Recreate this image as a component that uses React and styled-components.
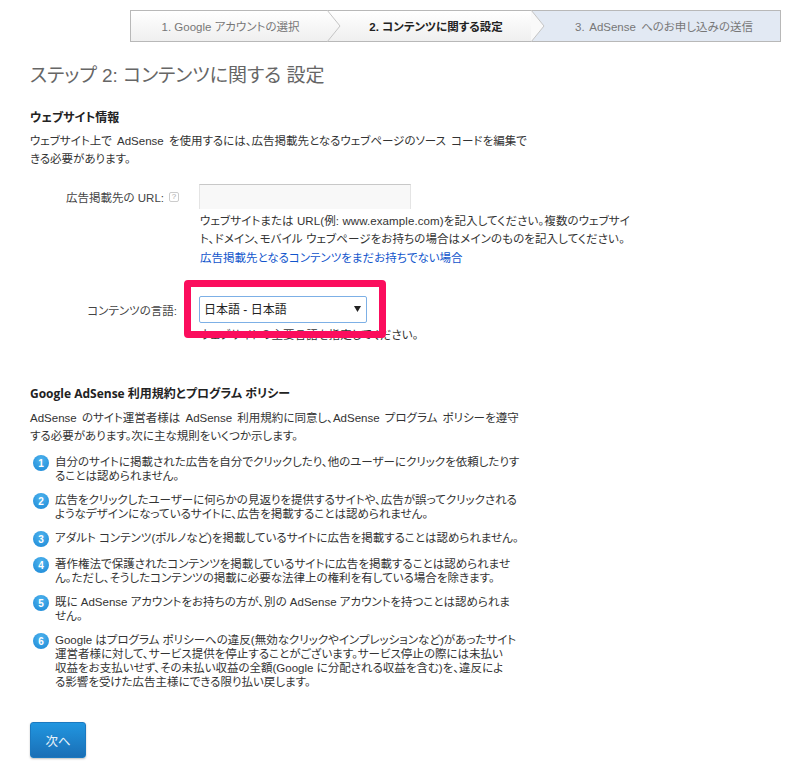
import React from "react";
import styled, { createGlobalStyle } from "styled-components";

const Global = createGlobalStyle`
  html, body { margin: 0; padding: 0; background: #fff; }
  body {
    font-family: "Liberation Sans", "Noto Sans CJK JP", sans-serif;
    font-size: 11.5px;
    font-feature-settings: "palt";
    color: #333;
  }
`;

const Page = styled.div`
  position: relative;
  width: 800px;
  height: 767px;
  overflow: hidden;
  box-sizing: border-box;
  padding: 10px 19px 0 30px;
`;

const Stepper = styled.div`
  display: flex;
  height: 32px;
  margin-left: 100px;
  box-sizing: border-box;
  border: 1px solid #b8b8b8;
  background: linear-gradient(#ffffff, #efefef);
`;

const Step = styled.div`
  position: relative;
  box-sizing: border-box;
  width: ${(p) => p.$w}px;
  flex: ${(p) => (p.$grow ? "1" : "none")};
  display: flex;
  align-items: center;
  justify-content: center;
  padding-left: ${(p) => p.$pl || 0}px;
  padding-right: ${(p) => p.$pr || 0}px;
  font-size: 11.5px;
  word-spacing: ${(p) => (p.$future ? 2 : 0)}px;
  color: ${(p) => (p.$active ? "#222" : "#777")};
  font-weight: ${(p) => (p.$active ? 700 : 400)};
  background: ${(p) => (p.$future ? "#e2e9f3" : "transparent")};
`;

const Chevron = styled.svg`
  position: absolute;
  right: -13px;
  top: -1px;
  width: 14px;
  height: 32px;
  z-index: 1;
`;

const Title = styled.h1`
  margin: 22px 0 0;
  font-size: 19px;
  font-weight: 400;
  line-height: 24px;
  color: #666;
`;

const SectionTitle = styled.h2`
  margin: ${(p) => p.$top}px 0 0;
  font-family: "Open Sans", "Noto Sans CJK JP", sans-serif;
  font-size: 12px;
  font-weight: 700;
  line-height: 16px;
  color: #222;
`;

const Para = styled.p`
  margin: ${(p) => p.$top || 0}px 0 0;
  line-height: 18px;
  word-spacing: 2px;
  color: #333;
  white-space: nowrap;
`;

const FormRow = styled.div`
  display: grid;
  grid-template-columns: 147px 1fr;
  column-gap: 22px;
  margin-top: ${(p) => p.$top}px;
`;

const Label = styled.div`
  display: flex;
  justify-content: flex-end;
  align-items: center;
  gap: 5px;
  height: ${(p) => p.$h}px;
  color: #444;
  white-space: nowrap;
`;

const Help = styled.span`
  display: inline-flex;
  align-items: center;
  justify-content: center;
  width: 8px;
  height: 8px;
  border: 1px solid #ccc;
  border-radius: 2px;
  font-size: 8px;
  color: #aaa;
  margin-right: -2px;
`;

const TextField = styled.div`
  width: 212px;
  height: 25px;
  box-sizing: border-box;
  border: 1px solid #e4e4e4;
  border-top-color: #c8c8c8;
  border-bottom: none;
  background: #f8f8f8;
`;

const Hint = styled.p`
  margin: 3px 0 0 1px;
  line-height: 18px;
  letter-spacing: 0.1px;
  color: #333;
  white-space: nowrap;
`;

const HintLink = styled.a`
  display: block;
  margin: 1px 0 0 1px;
  line-height: 18px;
  color: #15c;
  white-space: nowrap;
`;

const Select = styled.div`
  position: relative;
  z-index: 2;
  width: 168px;
  height: 27px;
  box-sizing: border-box;
  display: flex;
  align-items: center;
  justify-content: space-between;
  padding: 0 5px 2px 4px;
  border: 1px solid #7db0e6;
  border-radius: 2px;
  background: #fff;
  font-size: 12px;
  color: #222;
`;

const Caret = styled.svg`
  width: 7px;
  height: 6px;
`;

const Highlight = styled.div`
  position: absolute;
  left: 184px;
  top: 280px;
  width: 202px;
  height: 58px;
  box-sizing: border-box;
  border: 7px solid #fb0d5d;
  border-radius: 4px;
  z-index: 3;
  pointer-events: none;
`;

const Rules = styled.ol`
  list-style: none;
  margin: 10px 0 0;
  padding: 0;
  display: flex;
  flex-direction: column;
  gap: 10px;
`;

const Rule = styled.li`
  display: flex;
  align-items: flex-start;
  gap: 6px;
  min-height: 16px;
`;

const Badge = styled.span`
  flex: none;
  width: 16px;
  height: 16px;
  margin-left: 3px;
  border-radius: 50%;
  background: radial-gradient(circle at 50% 30%, #4fb4ee, #1a87d6);
  color: #fff;
  font-size: 10px;
  font-weight: 700;
  display: flex;
  align-items: center;
  justify-content: center;
`;

const RuleText = styled.div`
  line-height: 14px;
  color: #333;
  white-space: nowrap;
`;

const NextButton = styled.button`
  display: block;
  margin-top: 33px;
  width: 56px;
  height: 36px;
  border: 1px solid #1b79c0;
  border-radius: 3px;
  background: linear-gradient(#2196e0, #1a6fb6);
  box-shadow: 0 1px 2px rgba(0, 0, 0, 0.25);
  color: #e8f2fa;
  font: 400 12.5px "Liberation Sans", "Noto Sans CJK JP", sans-serif;
`;

const rules = [
  ["自分のサイトに掲載された広告を自分でクリックしたり、他のユーザーにクリックを依頼したりす", "ることは認められません。"],
  ["広告をクリックしたユーザーに何らかの見返りを提供するサイトや、広告が誤ってクリックされる", "ようなデザインになっているサイトに、広告を掲載することは認められません。"],
  ["アダルト コンテンツ(ポルノなど)を掲載しているサイトに広告を掲載することは認められません。"],
  ["著作権法で保護されたコンテンツを掲載しているサイトに広告を掲載することは認められませ", "ん。ただし、そうしたコンテンツの掲載に必要な法律上の権利を有している場合を除きます。"],
  ["既に AdSense アカウントをお持ちの方が、別の AdSense アカウントを持つことは認められま", "せん。"],
  ["Google はプログラム ポリシーへの違反(無効なクリックやインプレッションなど)があったサイト", "運営者様に対して、サービス提供を停止することがございます。サービス停止の際には未払い", "収益をお支払いせず、その未払い収益の全額(Google に分配される収益を含む)を、違反によ", "る影響を受けた広告主様にできる限り払い戻します。"],
];

const Arrow = ({ fill }) => (
  <Chevron viewBox="0 0 14 32">
    <path d="M0 0 L13 16 L0 32" fill={fill} stroke="#c4c4c4" />
  </Chevron>
);

export default function App() {
  return (
    <Page>
      <Global />
      <Stepper>
        <Step $w={197} $pl={2}>1. Google アカウントの選択<Arrow fill="none" /></Step>
        <Step $w={204} $active $pl={12}>2. コンテンツに関する設定<Arrow fill="#f9f9f9" /></Step>
        <Step $grow $future $pl={16}>3. AdSense へのお申し込みの送信</Step>
      </Stepper>

      <Title>ステップ 2: コンテンツに関する 設定</Title>

      <SectionTitle $top={22}>ウェブサイト情報</SectionTitle>
      <Para $top={6}>ウェブサイト上で AdSense を使用するには、広告掲載先となるウェブページのソース コードを編集で<br />きる必要があります。</Para>

      <FormRow $top={16}>
        <Label $h={25}>広告掲載先の URL:<Help>?</Help></Label>
        <div>
          <TextField />
          <Hint>ウェブサイトまたは URL(例: www.example.com)を記入してください。複数のウェブサイ<br />ト、ドメイン、モバイル ウェブページをお持ちの場合はメインのものを記入してください。</Hint>
          <HintLink>広告掲載先となるコンテンツをまだお持ちでない場合</HintLink>
        </div>
      </FormRow>

      <FormRow $top={29}>
        <Label $h={27}>コンテンツの言語:</Label>
        <div>
          <Select>
            日本語 - 日本語
            <Caret viewBox="0 0 7 6"><path d="M0 0H7L3.5 6Z" fill="#222" /></Caret>
          </Select>
          <Hint>ウェブサイトの主要言語を指定してください。</Hint>
        </div>
      </FormRow>
      <Highlight />

      <SectionTitle $top={42}>Google AdSense 利用規約とプログラム ポリシー</SectionTitle>
      <Para $top={7}>AdSense のサイト運営者様は AdSense 利用規約に同意し、AdSense プログラム ポリシーを遵守<br />する必要があります。次に主な規則をいくつか示します。</Para>

      <Rules>
        {rules.map((lines, i) => (
          <Rule key={i}>
            <Badge>{i + 1}</Badge>
            <RuleText>
              {lines.map((l, j) => (
                <div key={j}>{l}</div>
              ))}
            </RuleText>
          </Rule>
        ))}
      </Rules>

      <NextButton>次へ</NextButton>
    </Page>
  );
}
